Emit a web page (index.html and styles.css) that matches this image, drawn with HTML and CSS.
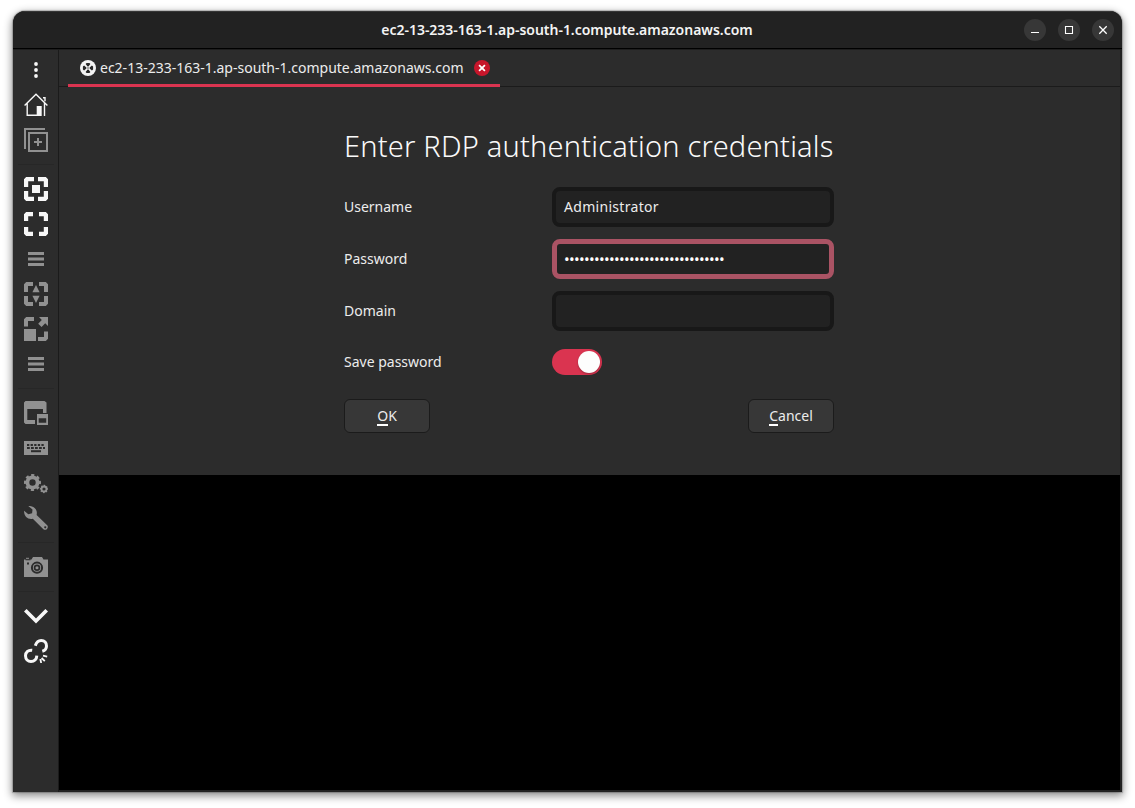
FILE: index.html
```html
<!DOCTYPE html>
<html lang="en">
<head>
<meta charset="utf-8">
<title>Remote desktop</title>
<link rel="stylesheet" href="styles.css">
</head>
<body>
<main class="window">
  <header class="titlebar">
    <h1 class="title">ec2-13-233-163-1.ap-south-1.compute.amazonaws.com</h1>
    <div class="controls">
      <button class="ctl"><svg width="22" height="22" viewBox="0 0 22 22"><path fill="#fff" d="M7 13h8v1H7z"/></svg></button>
      <button class="ctl"><svg width="22" height="22" viewBox="0 0 22 22"><path fill="none" stroke="#fff" stroke-width="1.1" d="M7.5 7.5h7v7h-7z"/></svg></button>
      <button class="ctl"><svg width="22" height="22" viewBox="0 0 22 22"><path fill="none" stroke="#fff" stroke-width="1.3" d="M7.3 7.3l7.4 7.4M14.7 7.3l-7.4 7.4"/></svg></button>
    </div>
  </header>
  <div class="body">
    <nav class="sidebar">
      <button class="tool on"><svg viewBox="0 0 24 24"><g fill="currentColor"><circle cx="12" cy="6" r="1.9"/><circle cx="12" cy="12" r="1.9"/><circle cx="12" cy="18" r="1.9"/></g></svg></button>
      <button class="tool on"><svg viewBox="0 0 24 24"><path fill="none" stroke="currentColor" stroke-width="1.4" d="M.6 12.6L12 1.2l11.4 11.4M3.2 10.5v11.8h11M20.5 10v12.9M19 4.7h2v3.6"/><path fill="currentColor" d="M12.7 13h5v10h-5z"/></svg></button>
      <button class="tool"><svg viewBox="0 0 24 24"><path fill="none" stroke="currentColor" stroke-width="2" d="M1 21V1h20M5 5h18v18H5z"/><path fill="none" stroke="currentColor" stroke-width="2" d="M10 14h8M14 10v8"/></svg></button>
      <hr class="sep">
      <button class="tool on"><svg viewBox="0 0 24 24"><path fill="none" stroke="currentColor" stroke-width="4.2" d="M2.1 10V3l.9-.9h7M14 2.1h7l.9.9v7M21.9 14v7l-.9.9h-7M10 21.9H3l-.9-.9v-7"/><path fill="currentColor" d="M8 8h8v8H8z"/></svg></button>
      <button class="tool on"><svg viewBox="0 0 24 24"><path fill="none" stroke="currentColor" stroke-width="4.2" d="M2.1 9V3l.9-.9h6M15 2.1h6l.9.9v6M21.9 15v6l-.9.9h-6M9 21.9H3l-.9-.9v-6"/></svg></button>
      <button class="tool"><svg viewBox="0 0 24 24"><path fill="currentColor" d="M4 5h16v2.9H4zM4 10.5h16v3H4zM4 16.1h16V19H4z"/></svg></button>
      <button class="tool"><svg viewBox="0 0 24 24"><path fill="none" stroke="currentColor" stroke-width="4" d="M2 10V3l1-1h6M15 2h6l1 1v7M22 14v7l-1 1h-6M9 22H3l-1-1v-7"/><path fill="currentColor" d="M12 3l3.6 7.3H8.4zM12 21l3.6-7.3H8.4z"/></svg></button>
      <button class="tool"><svg viewBox="0 0 24 24"><path fill="none" stroke="currentColor" stroke-width="4" d="M2 9.5V3l1-1h7M22 14.5V21l-1 1h-7"/><path fill="currentColor" d="M0 12h12v12H0zM15 0h9v9l-2.8-2.7-3.6 3.8-3.4-3.4 3.6-3.8z"/></svg></button>
      <button class="tool"><svg viewBox="0 0 24 24"><path fill="currentColor" d="M4 5h16v2.9H4zM4 10.5h16v3H4zM4 16.1h16V19H4z"/></svg></button>
      <hr class="sep">
      <button class="tool"><svg viewBox="0 0 24 24"><path fill="currentColor" fill-rule="evenodd" d="M1.5 0h19L22.5 1.5V12H19V8H3.3v11H11v4H1.5L0 21.5v-20zM13 13h11v11H13zM14.7 17.2v4.6h7.5v-4.6z"/></svg></button>
      <button class="tool"><svg viewBox="0 0 24 24"><path fill="currentColor" d="M0 5h24v14H0z"/><g fill="none" stroke="#2b2b2b" stroke-width="2"><path stroke-dasharray="2.3 1.3" d="M3 9h18"/><path stroke-dasharray="2.8 1.2" d="M3 12h18"/><path d="M7 15.2h10"/></g></svg></button>
      <button class="tool"><svg viewBox="0 0 24 24"><g fill="none" stroke="currentColor"><circle cx="8.5" cy="11.5" r="5.1" stroke-width="3.8"/><circle cx="8.5" cy="11.5" r="7.4" stroke-width="2.2" stroke-dasharray="3.1 2.71" transform="rotate(-12 8.5 11.5)"/><circle cx="20" cy="18" r="2.5" stroke-width="1.8"/><circle cx="20" cy="18" r="3.6" stroke-width="1.1" stroke-dasharray="1.5 1.33" transform="rotate(-12 20 18)"/></g></svg></button>
      <button class="tool"><svg viewBox="0 0 24 24"><path fill="currentColor" fill-rule="evenodd" d="M4.3 0C9.5-.5 14 3.5 12.6 9l10.6 10.2c2 2.5-1.2 6-3.8 4L8.8 12.7C4 13.8-.3 10 .1 4.7l4.2 3.6 3.8-1.1.4-3.6zM21.2 20.3a1 1 0 1 0 .1 0z"/></svg></button>
      <hr class="sep">
      <button class="tool"><svg viewBox="0 0 24 24"><path fill="currentColor" d="M0 4.5h7.5L9 2h9l1.5 2.5H24V22H0z"/><path fill="currentColor" d="M2 2.8h3v1H2z"/><circle cx="13" cy="12.7" r="5.1" fill="none" stroke="#2b2b2b" stroke-width="2"/><circle cx="13" cy="12.7" r="2.4" fill="none" stroke="#2b2b2b" stroke-width="1.7"/><path fill="#2b2b2b" d="M3 7.5h2v2H3zM1.5 4.3h5v1h-5z"/></svg></button>
      <hr class="sep">
      <button class="tool on"><svg viewBox="0 0 24 24"><path fill="none" stroke="currentColor" stroke-width="3.7" d="M1.3 6.3L12 17 22.7 6.3"/></svg></button>
      <button class="tool on"><svg viewBox="0 0 24 24"><g fill="none" stroke="currentColor" stroke-width="3"><path d="M11.3 6.7C12.4 3.4 14.4 1.5 17.2 1.5c3.4 0 5.3 2.5 5.3 5.4 0 2.5-1.6 4.6-4.2 5.4"/><path d="M8.2 11.2C4.4 10.7 1.5 13.2 1.5 16.8c0 3.2 2.4 5.7 5.5 5.7 3.3 0 5.7-2.2 5.8-5.9"/><path stroke-width="1.8" d="M19 16.7l4.2.9M17.6 19l3.2 3.2M16.3 20l.9 4"/></g></svg></button>
    </nav>
    <section class="content">
      <div class="tabs">
        <div class="tab">
          <svg class="tabicon" viewBox="0 0 16 16"><circle cx="8" cy="8" r="8" fill="#f4f4f4"/><g fill="#282828"><path d="M6.6 2.9h2.8l1 1.2L8.4 6.4h-.8L5.6 4.1zM6.6 13.1h2.8l1-1.2-2-2.3h-.8l-2 2.3zM2.9 6.6v2.8l1.2 1 2.3-2v-.8l-2.3-2zM13.1 6.6v2.8l-1.2 1-2.3-2v-.8l2.3-2z"/><circle cx="8" cy="8" r=".7"/></g></svg>
          <span class="tabtext">ec2-13-233-163-1.ap-south-1.compute.amazonaws.com</span>
          <button class="tabclose"><svg width="16" height="16" viewBox="0 0 16 16"><path fill="none" stroke="#fff" stroke-width="1.8" d="M5.1 5.1l5.8 5.8M10.9 5.1l-5.8 5.8"/></svg></button>
        </div>
      </div>
      <div class="panel">
        <form class="form">
          <h2 class="heading"><span>Enter RDP authentication credentials</span></h2>
          <div class="row"><label>Username</label><div class="field"><span class="value">Administrator</span></div></div>
          <div class="row"><label>Password</label><div class="field focus"><span class="dots">••••••••••••••••••••••••••••••••</span></div></div>
          <div class="row"><label>Domain</label><div class="field"></div></div>
          <div class="row save"><label>Save password</label><div class="switch"><i class="knob"></i></div></div>
          <div class="actions">
            <button type="button" class="btn"><span class="key">O</span>K</button>
            <button type="button" class="btn cancel"><span class="key">C</span>ancel</button>
          </div>
        </form>
      </div>
    </section>
  </div>
</main>
</body>
</html>
```

FILE: styles.css
```css
* { box-sizing: border-box; }
body {
  margin: 0;
  padding: 11px 13px 16px;
  height: 808px;
  background: #fff;
  color: #ececec;
  font: 14px/20px "Noto Sans", "Open Sans", sans-serif;
  overflow: hidden;
}
button { border: 0; padding: 0; margin: 0; color: inherit; font: inherit; background: none; }
svg { display: block; }
.window {
  width: 1109px;
  height: 781px;
  display: flex;
  flex-direction: column;
  background: #2c2c2c;
  border-radius: 12px 12px 0 0;
  box-shadow: 0 0 1px 1px rgba(0,0,0,.2), 0 3px 9px 1px rgba(0,0,0,.45);
  overflow: hidden;
}
.titlebar {
  height: 38px;
  flex: none;
  display: grid;
  grid-template-columns: 110px 1fr 110px;
  align-items: center;
  background: #222;
  border-top: 1px solid #363636;
  border-bottom: 1px solid #000;
}
.title {
  grid-column: 2;
  margin: 0;
  text-align: center;
  font-size: 14px;
  line-height: 20px;
  font-weight: 600;
  letter-spacing: -.02px;
  padding-right: 1px;
  white-space: nowrap;
  color: #f4f4f4;
}
.controls { display: flex; gap: 12px; padding-left: 12px; }
.ctl { width: 22px; height: 22px; border-radius: 50%; background: #373737; }
.body { flex: 1; display: flex; min-height: 0; border-top: 1px solid #1e1e1e; }
.sidebar {
  width: 46px;
  border-right: 1px solid #1b1b1b;
  padding-top: 3px;
  display: flex;
  flex-direction: column;
  align-items: center;
}
.tool { height: 35px; padding: 5px 0 6px; color: #919191; flex: none; }
.tool.on { color: #f7f7f7; }
.tool svg { width: 24px; height: 24px; }
.sep { width: 36px; height: 1px; margin: 6px 0 7px; border: 0; background: #272727; flex: none; }
.content {
  flex: 1;
  display: flex;
  flex-direction: column;
  background: #000;
  border-right: 2px solid #222;
  border-bottom: 2px solid #222;
}
.tabs { height: 37px; background: #2c2c2c; border-bottom: 1px solid #1b1b1b; padding-left: 9px; flex: none; }
.tab {
  width: 432px;
  height: 37px;
  display: flex;
  align-items: center;
  padding: 2px 10px 0 12px;
  border-bottom: 3px solid #da3450;
  white-space: nowrap;
}
.tabicon { width: 16px; height: 16px; margin-right: 4px; flex: none; }
.tabtext { width: 364px; }
.tabclose { width: 16px; height: 16px; border-radius: 50%; background: #c7162b; margin-left: 10px; flex: none; }
.panel { height: 388px; background: #2c2c2c; padding: 36px 0 0 285px; }
.form { width: 490px; }
.heading { margin: -1px 0 17px; height: 48px; font-size: 29px; line-height: 48px; font-weight: 300; letter-spacing: .2px; white-space: nowrap; color: #fafafa; }
.row { height: 40px; margin-bottom: 12px; display: flex; align-items: center; }
.row label { width: 208px; flex: none; white-space: nowrap; }
.value { letter-spacing: .3px; }
.field {
  width: 282px;
  height: 40px;
  border: 4px solid #181818;
  border-radius: 8px;
  background: #222;
  padding: 0 8px;
  display: flex;
  align-items: center;
}
.field.focus { border: 5px solid #aa5364; padding: 0 7px; }
.dots { font-size: 15px; letter-spacing: -.64px; padding-bottom: 1px; white-space: nowrap; color: #fff; }
.row.save { height: 38px; margin-bottom: 18px; }
.switch { width: 50px; height: 26px; border-radius: 13px; background: #da3450; display: flex; justify-content: flex-end; padding: 2px; }
.knob { width: 22px; height: 22px; border-radius: 50%; background: #fdfdfd; box-shadow: 0 1px 2px rgba(0,0,0,.3); }
.actions { display: flex; justify-content: space-between; }
.btn { width: 86px; height: 34px; border: 1px solid #1b1b1b; border-radius: 6px; background: #373737; }
.key { display: inline-block; line-height: 16px; border-bottom: 2px solid #fff; }
```
